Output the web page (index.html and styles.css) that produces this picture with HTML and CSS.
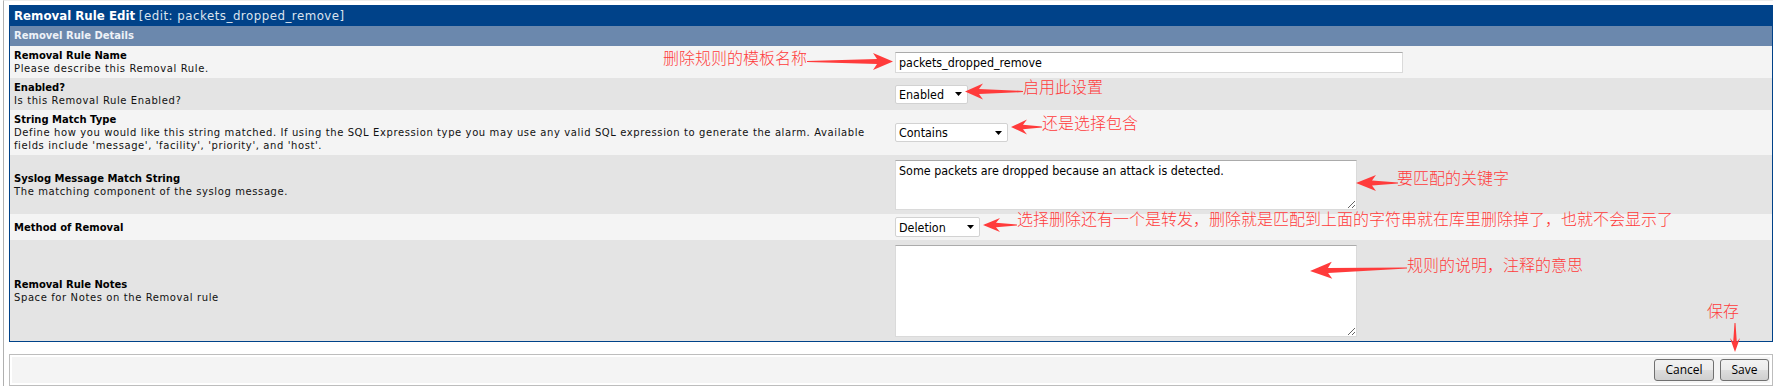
FILE: index.html
```html
<!DOCTYPE html>
<html>
<head>
<meta charset="utf-8">
<title>Removal Rule Edit</title>
<link rel="stylesheet" href="styles.css">
</head>
<body>
<div class="frame">
  <div class="panel">
    <div class="hdr"><span class="hdr-title">Removal Rule Edit</span> <span class="hdr-ed">[edit: packets_dropped_remove]</span></div>
    <div class="sub">Removel Rule Details</div>

    <div class="row light r1">
      <div class="lbl"><div class="name">Removal Rule Name</div><div class="desc">Please describe this Removal Rule.</div></div>
      <div class="ctl"><input class="ctrl txt" type="text" value="packets_dropped_remove"></div>
    </div>

    <div class="row dark r2">
      <div class="lbl"><div class="name">Enabled?</div><div class="desc">Is this Removal Rule Enabled?</div></div>
      <div class="ctl"><select class="ctrl sel sel-enabled"><option>Enabled</option><option>Disabled</option></select></div>
    </div>

    <div class="row light r3">
      <div class="lbl"><div class="name">String Match Type</div><div class="desc">Define how you would like this string matched. If using the SQL Expression type you may use any valid SQL expression to generate the alarm. Available fields include 'message', 'facility', 'priority', and 'host'.</div></div>
      <div class="ctl"><select class="ctrl sel sel-contains"><option>Contains</option><option>Begins with</option><option>Ends with</option><option>SQL Expression</option></select></div>
    </div>

    <div class="row dark r4">
      <div class="lbl"><div class="name">Syslog Message Match String</div><div class="desc">The matching component of the syslog message.</div></div>
      <div class="ctl"><textarea class="ctrl ta ta1">Some packets are dropped because an attack is detected.</textarea></div>
    </div>

    <div class="row light r5">
      <div class="lbl"><div class="name">Method of Removal</div></div>
      <div class="ctl"><select class="ctrl sel sel-del"><option>Deletion</option><option>Transfer</option></select></div>
    </div>

    <div class="row dark r6">
      <div class="lbl"><div class="name">Removal Rule Notes</div><div class="desc">Space for Notes on the Removal rule</div></div>
      <div class="ctl"><textarea class="ctrl ta ta2"></textarea></div>
    </div>
  </div>

  <div class="bar">
    <div class="bar-in">
      <button class="btn btn-cancel" type="button">Cancel</button>
      <button class="btn btn-save" type="button">Save</button>
    </div>
  </div>
</div>

<svg class="arrows" width="1778" height="386" viewBox="0 0 1778 386" xmlns="http://www.w3.org/2000/svg">
  <g fill="#ff3b3b">
    <path transform="translate(807,61.5)" d="M0,-0.6 L70,-2.4 L66,-8.5 L86,0 L66,8.5 L70,2.4 L0,0.6 Z"/>
    <path transform="translate(1023,91.5) rotate(180)" d="M0,-0.6 L44,-2.4 L40,-8 L58,0 L40,8 L44,2.4 L0,0.6 Z"/>
    <path transform="translate(1042,127) rotate(180)" d="M0,-0.6 L19,-2.2 L15,-7.5 L31,0 L15,7.5 L19,2.2 L0,0.6 Z"/>
    <path transform="translate(1398,183) rotate(180)" d="M0,-0.6 L26,-2.4 L22,-8 L42,0 L22,8 L26,2.4 L0,0.6 Z"/>
    <path transform="translate(1017,225) rotate(180)" d="M0,-0.6 L21,-2.2 L17,-7 L34,0 L17,7 L21,2.2 L0,0.6 Z"/>
    <path transform="translate(1407,268) rotate(178.2)" d="M0,-0.6 L79,-2.6 L75,-8.5 L97,0 L75,8.5 L79,2.6 L0,0.6 Z"/>
    <path transform="translate(1735,323) rotate(90)" d="M0,-0.5 L19,-1.8 L15,-5 L29,0 L15,5 L19,1.8 L0,0.5 Z"/>
  </g>
</svg>

<span class="note n1">删除规则的模板名称</span>
<span class="note n2">启用此设置</span>
<span class="note n3">还是选择包含</span>
<span class="note n4">要匹配的关键字</span>
<span class="note n5">选择删除还有一个是转发，删除就是匹配到上面的字符串就在库里删除掉了，也就不会显示了</span>
<span class="note n6">规则的说明，注释的意思</span>
<span class="note n7">保存</span>
</body>
</html>
```

FILE: styles.css
```css
html, body {
  margin: 0;
  padding: 0;
}

body {
  position: relative;
  width: 1778px;
  height: 386px;
  overflow: hidden;
  background: #ffffff;
  font-family: "DejaVu Sans", Verdana, sans-serif;
  color: #000;
}

.frame {
  box-sizing: border-box;
  height: 386px;
  margin: 0 5px 0 3px;
  border-left: 1px solid #b0b0b0;
  border-top: 1px solid #ececec;
  padding: 4px 0 0 5px;
}

.panel {
  border: 1px solid #004289;
}

.hdr {
  height: 20px;
  line-height: 20px;
  padding-left: 4px;
  background: #004289;
  color: #ffffff;
  font-size: 11.8px;
  white-space: nowrap;
}

.hdr-title {
  font-weight: bold;
}

.hdr-ed {
  color: #dce4ef;
  letter-spacing: 0.5px;
}

.sub {
  height: 20px;
  line-height: 20px;
  padding-left: 4px;
  background: #6b88ad;
  color: #eef2f8;
  font-size: 10px;
  font-weight: bold;
}

.row {
  display: grid;
  grid-template-columns: 881px 1fr;
  align-items: center;
}

.light { background: #f4f4f4; }
.dark { background: #e4e4e4; }

.r1 { height: 32px; }
.r2 { height: 32px; }
.r3 { height: 45px; }
.r4 { height: 59px; }
.r5 { height: 26px; }
.r6 { height: 101px; }

.lbl {
  padding: 0 4px;
  font-size: 10px;
  line-height: 13px;
  color: #000;
}

.name {
  font-weight: bold;
}

.desc {
  letter-spacing: 0.6px;
  color: #111;
}

.ctl {
  display: flex;
  align-items: center;
  padding-left: 4px;
}

.ctrl {
  box-sizing: border-box;
  margin: 0;
  font-family: "DejaVu Sans Condensed", "DejaVu Sans", sans-serif;
  font-size: 12.4px;
  color: #000;
  background: #fff;
  outline: none;
}

.txt {
  width: 508px;
  height: 21px;
  padding: 0 3px;
  border: 1px solid #dadada;
  border-top-color: #ababab;
}

.sel {
  appearance: none;
  -webkit-appearance: none;
  height: 19px;
  padding: 0 0 0 3px;
  border: 1px solid #d2d2d2;
  border-radius: 2px;
  background: #fff url("data:image/svg+xml;utf8,<svg xmlns='http://www.w3.org/2000/svg' width='7' height='4'><path d='M0,0 L7,0 L3.5,4 Z' fill='black'/></svg>") no-repeat right 5px center;
  line-height: 17px;
}

.sel-enabled { width: 73px; }
.sel-contains { width: 113px; }
.sel-del { width: 85px; height: 20px; }

.ta {
  display: block;
  width: 462px;
  padding: 2px 3px;
  border: 1px solid #dadada;
  border-top-color: #ababab;
  resize: both;
  line-height: 15px;
}

.ta1 { height: 50px; }
.ta2 { height: 92px; }

.bar {
  margin-top: 12px;
  border: 1px solid #bdbdbd;
  padding: 2px;
  background: #fff;
}

.bar-in {
  display: flex;
  justify-content: flex-end;
  gap: 6px;
  height: 26px;
  padding: 2px 1px 2px 0;
  box-sizing: border-box;
  background: #f4f4f4;
}

.btn {
  box-sizing: border-box;
  height: 22px;
  margin: 0;
  padding: 0;
  border: 1px solid #707070;
  border-radius: 3px;
  background: linear-gradient(#f2f2f2 0%, #ebebeb 50%, #dddddd 50%, #cfcfcf 100%);
  font-family: "Open Sans", "DejaVu Sans", sans-serif;
  font-size: 12px;
  color: #000;
  line-height: 20px;
}

.btn-cancel { width: 60px; }
.btn-save { width: 49px; }

.arrows {
  position: absolute;
  left: 0;
  top: 0;
  pointer-events: none;
}

.note {
  position: absolute;
  font-family: "Noto Sans CJK SC", sans-serif;
  font-size: 16px;
  font-weight: 300;
  line-height: 16px;
  color: #ff3b3b;
  white-space: nowrap;
  pointer-events: none;
}

.n1 { left: 663px; top: 49px; }
.n2 { left: 1023px; top: 78px; }
.n3 { left: 1042px; top: 114px; }
.n4 { left: 1397px; top: 169px; }
.n5 { left: 1017px; top: 210px; }
.n6 { left: 1407px; top: 256px; }
.n7 { left: 1707px; top: 302px; }
```
